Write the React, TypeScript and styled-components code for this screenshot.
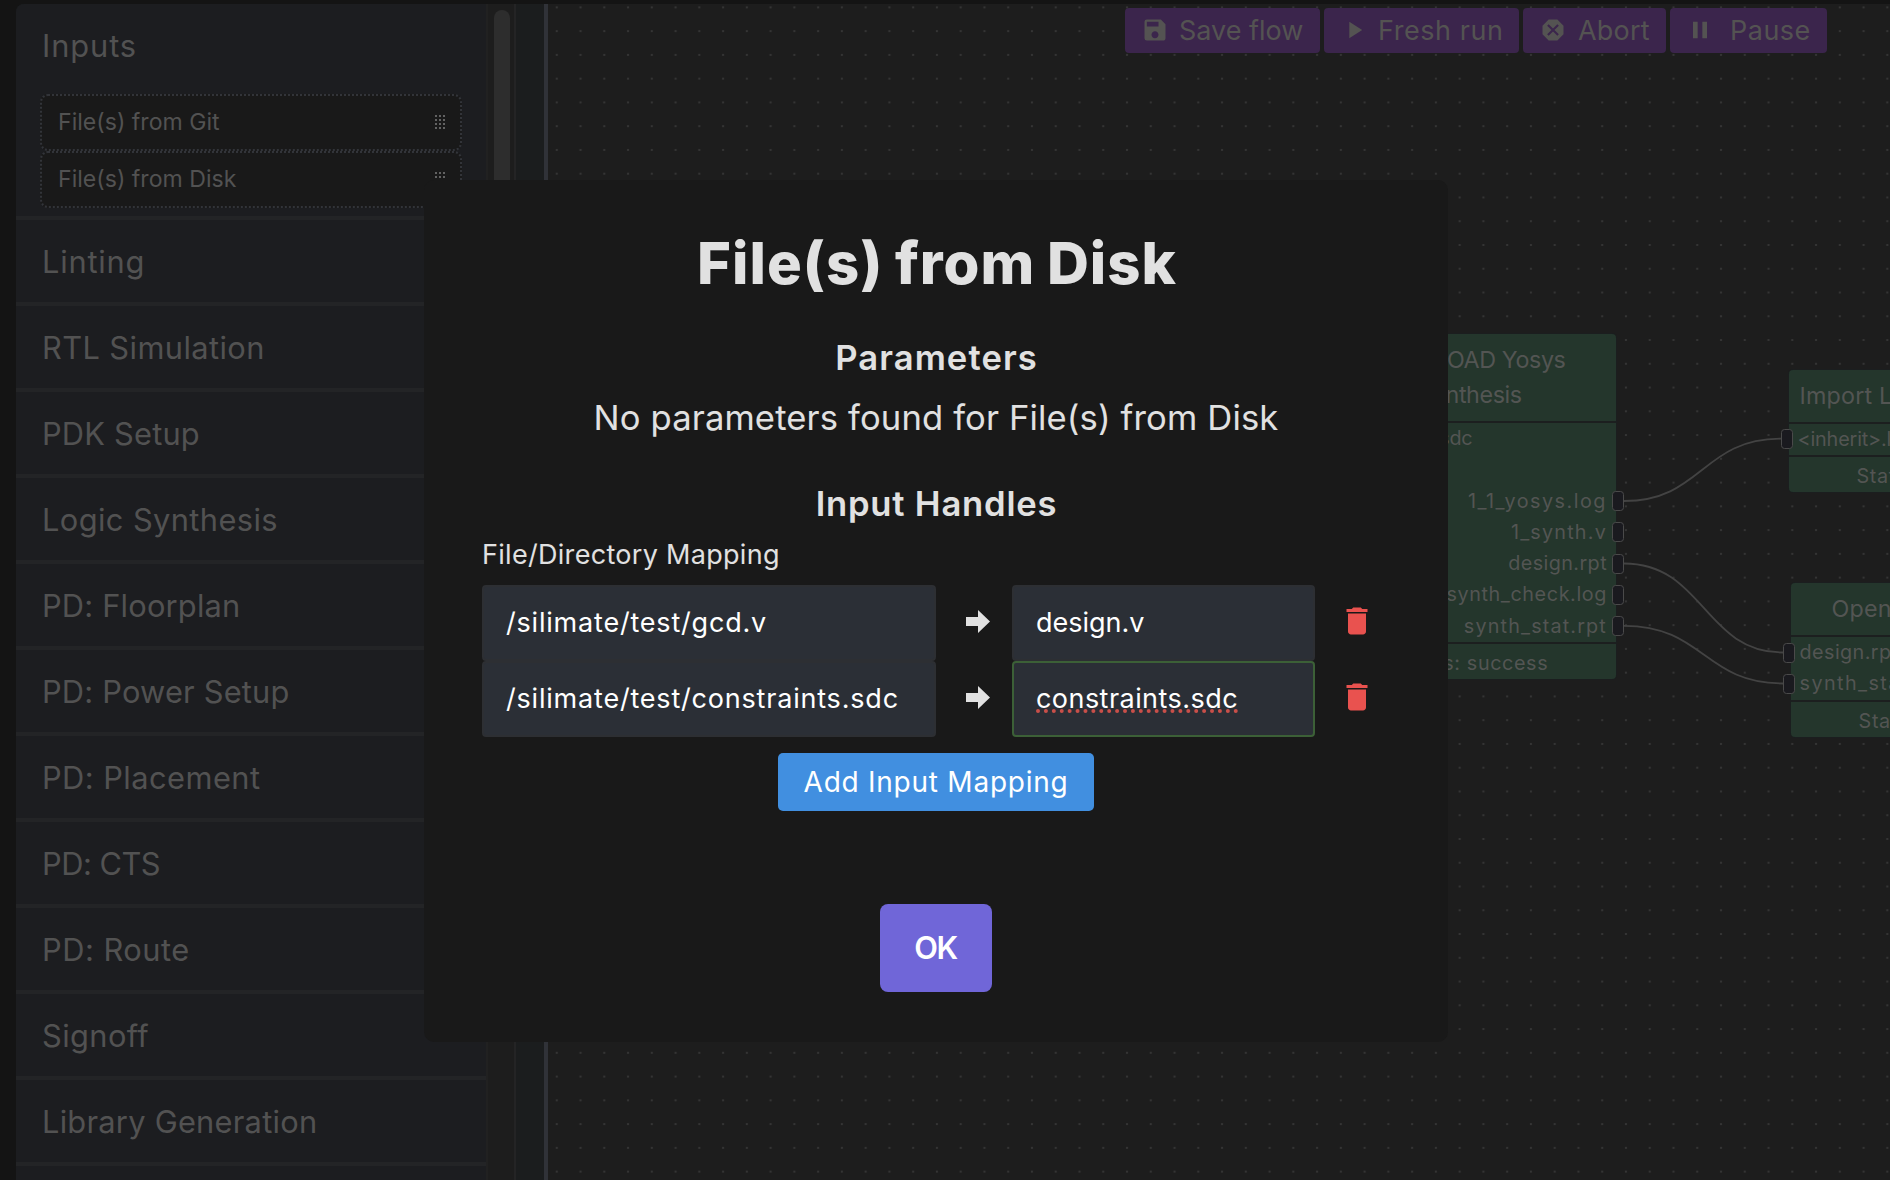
import React from 'react';
import styled, { createGlobalStyle } from 'styled-components';
import { MdSave, MdPlayArrow, MdDangerous, MdPause, MdDelete } from 'react-icons/md';

const GlobalStyle = createGlobalStyle`
  *, *::before, *::after { box-sizing: border-box; }
  html, body { margin: 0; padding: 0; background: #141414; overflow: hidden; }
  body { font-family: Inter, Roboto, "Liberation Sans", sans-serif; }
`;

const Screen = styled.div`
  display: flex;
  width: 1890px;
  height: 1180px;
  padding: 4px 0 0 16px;
  overflow: hidden;
  background: #141414;
`;

/* ---------- sidebar ---------- */

const Sidebar = styled.aside`
  display: flex;
  flex: 0 0 528px;
  overflow: hidden;
  border-top-left-radius: 8px;
  background: #1b1d1e;
`;

const StageList = styled.div`
  flex: 0 0 470px;
  overflow: hidden;
  background: #1c1d20;
`;

const Stage = styled.section`
  border-bottom: 4px solid #232426;
`;

const StageTitle = styled.div<{ $ls?: number }>`
  height: 82px;
  padding-left: 26px;
  line-height: 83px;
  font-size: 30.8px;
  letter-spacing: ${(p) => p.$ls ?? 0.3}px;
  color: #525252;
  white-space: nowrap;
`;

const StageItems = styled.div`
  display: flex;
  flex-direction: column;
  padding: 8px 24px 8px;
`;

const StageItem = styled.div`
  display: flex;
  align-items: center;
  justify-content: space-between;
  height: 57px;
  padding: 0 15px 2px 16px;
  border: 2px dotted #323439;
  border-radius: 8px;
  background: #191919;
  font-size: 23.1px;
  color: #525252;
`;

const ScrollTrack = styled.div`
  flex: 0 0 30px;
  padding: 6px 4px 0 6px;
  border-left: 2px solid #212121;
  border-right: 2px solid #242425;
  background: #1d1d1d;
`;

const ScrollThumb = styled.div`
  width: 16px;
  height: 520px;
  border-radius: 8px;
  background: #2d2d2d;
`;

/* ---------- canvas ---------- */

const Canvas = styled.main`
  position: relative;
  flex: 1;
  overflow: hidden;
  border-left: 4px solid #303238;
  background: #1d1d1d;
`;

const CanvasLayer = styled.svg`
  position: absolute;
  inset: 0;
  width: 100%;
  height: 100%;
`;

const Toolbar = styled.div`
  position: absolute;
  top: 4px;
  right: 63px;
  display: flex;
  gap: 4px;
`;

const ToolButton = styled.div<{ $w: number; $gap?: number; $ls?: number }>`
  display: flex;
  align-items: center;
  gap: ${(p) => p.$gap ?? 10}px;
  width: ${(p) => p.$w}px;
  height: 45px;
  padding: 0 0 1px 16px;
  border-radius: 4px;
  background: #3b254c;
  color: #545352;
  font-size: 27px;
  letter-spacing: ${(p) => p.$ls ?? 0}px;
  white-space: nowrap;
`;

const NodeBox = styled.div<{ $x: number; $y: number; $w: number }>`
  position: absolute;
  left: ${(p) => p.$x - 548}px;
  top: ${(p) => p.$y - 4}px;
  width: ${(p) => p.$w}px;
  border-radius: 4px;
  background: #24362c;
  box-shadow: 0 0 0 1px #1b1e1f;
  color: #535553;
`;

const NodeHeader = styled.div<{ $indent?: number }>`
  padding: 8px 0 9px ${(p) => p.$indent ?? 0}px;
  border-bottom: 2px solid #1c1f1f;
  font-size: 23.3px;
  line-height: 35px;
  letter-spacing: ${(p) => (p.$indent ? 0.2 : -0.4)}px;
  text-align: ${(p) => (p.$indent ? 'left' : 'center')};
  white-space: nowrap;
`;

const PortRow = styled.div<{ $out?: boolean; $ls?: number }>`
  position: relative;
  height: 31.3px;
  padding: 0 9px;
  line-height: 31.8px;
  font-size: 19.8px;
  letter-spacing: ${(p) => p.$ls ?? 0.6}px;
  text-align: ${(p) => (p.$out ? 'right' : 'left')};
  white-space: nowrap;
`;

const Port = styled.i<{ $out?: boolean }>`
  position: absolute;
  top: 5.5px;
  ${(p) => (p.$out ? 'right: -8px;' : 'left: -8px;')}
  width: 12px;
  height: 20px;
  border: 1px solid #4a4a4a;
  border-radius: 3.5px;
  background: #1a1a1f;
`;

const NodeFooter = styled.div<{ $indent?: number }>`
  height: 37px;
  padding: 2px 0 0 ${(p) => p.$indent ?? 0}px;
  border-top: 2px solid #1c1f1f;
  line-height: 34px;
  font-size: 19.8px;
  letter-spacing: 0.6px;
  text-align: ${(p) => (p.$indent ? 'left' : 'center')};
  white-space: nowrap;
`;

/* ---------- modal ---------- */

const Overlay = styled.div`
  position: fixed;
  inset: 0;
  display: flex;
  align-items: flex-start;
  padding: 180px 0 0 424px;
`;

const Modal = styled.div`
  display: flex;
  flex-direction: column;
  align-items: center;
  width: 1024px;
  height: 862px;
  padding: 47px 58px 50px;
  border-radius: 10px;
  background: #191919;
  color: #e1e1e1;
`;

const Title = styled.h1`
  margin: 0;
  padding-left: 2px;
  font-size: 58px;
  font-weight: 800;
  line-height: 72px;
  letter-spacing: 1px;
  word-spacing: -2px;
`;

const Heading = styled.h2<{ $top: number; $ls: number }>`
  margin: ${(p) => p.$top}px 0 0;
  padding-left: 1px;
  font-size: 34.6px;
  font-weight: 600;
  line-height: 48px;
  letter-spacing: ${(p) => p.$ls}px;
`;

const Note = styled.p`
  margin: 12px 0 0;
  font-size: 34.6px;
  line-height: 48px;
  letter-spacing: 0.14px;
`;

const MappingLabel = styled.div`
  align-self: flex-start;
  margin: 8px 0 10px;
  font-size: 27px;
  line-height: 40px;
  letter-spacing: 0.3px;
`;

const MappingRow = styled.div`
  display: flex;
  align-items: center;
  align-self: flex-start;
  height: 76px;
`;

const Field = styled.div<{ $w: number; $focus?: boolean; $ls?: number }>`
  width: ${(p) => p.$w}px;
  height: 76px;
  padding-left: 22px;
  border: 2px solid ${(p) => (p.$focus ? '#3c6037' : '#2d2f33')};
  border-radius: 4px;
  background: #2b2f36;
  color: #fff;
  font-size: 27px;
  line-height: 71px;
  letter-spacing: ${(p) => p.$ls ?? 0}px;
  white-space: nowrap;
`;

const Misspelled = styled.span`
  text-decoration: underline dotted #c94f49 4px;
  text-underline-offset: 1px;
  text-decoration-skip-ink: none;
`;

const ArrowCell = styled.div`
  display: flex;
  justify-content: center;
  width: 76px;
  padding: 0 0 3px 8px;
`;

const DeleteButton = styled.div`
  display: flex;
  margin: 0 0 4px 24px;
  color: #e9524f;
`;

const AddButton = styled.div`
  flex: none;
  width: 316px;
  height: 58px;
  margin-top: 16px;
  border-radius: 5px;
  background: #418fe0;
  color: #fff;
  font-size: 28px;
  line-height: 58px;
  letter-spacing: 0.75px;
  text-align: center;
`;

const OkButton = styled.div`
  flex: none;
  width: 112px;
  height: 88px;
  margin-top: 93px;
  padding-right: 1px;
  border-radius: 8px;
  background: #7066d8;
  color: #fff;
  font-size: 30.8px;
  font-weight: 600;
  line-height: 88px;
  letter-spacing: -1.4px;
  text-align: center;
`;

const Grip = () => (
  <svg width="10" height="14" fill="#626262">
    {[0, 4, 8].map((x) =>
      [0, 4, 8, 12].map((y) => <rect key={`${x}-${y}`} x={x} y={y} width="2" height="2" />)
    )}
  </svg>
);

const Arrow = () => (
  <svg width="24" height="23" viewBox="0 0 24 23" fill="#e1e1e1">
    <path d="M0 7H12V0L24 11.5L12 23V16H0Z" />
  </svg>
);

const stages: [string, number][] = [
  ['Linting', 0.8],
  ['RTL Simulation', 0.4],
  ['PDK Setup', 0.2],
  ['Logic Synthesis', 0.4],
  ['PD: Floorplan', 0.2],
  ['PD: Power Setup', 0.2],
  ['PD: Placement', 0.45],
  ['PD: CTS', -0.5],
  ['PD: Route', 0.5],
  ['Signoff', 0.4],
  ['Library Generation', 0.25],
];

const yosysOutputs: [string, number][] = [
  ['1_1_yosys.log', 1.5],
  ['1_synth.v', 1.2],
  ['design.rpt', 0.4],
  ['synth_check.log', 0.6],
  ['synth_stat.rpt', 1.15],
];

export default function App() {
  return (
    <>
      <GlobalStyle />
      <Screen>
        <Sidebar>
          <StageList>
            <Stage>
              <StageTitle $ls={0.9}>Inputs</StageTitle>
              <StageItems>
                <StageItem>File(s) from Git<Grip /></StageItem>
                <StageItem>File(s) from Disk<Grip /></StageItem>
              </StageItems>
            </Stage>
            {stages.map(([name, ls]) => (
              <Stage key={name}>
                <StageTitle $ls={ls}>{name}</StageTitle>
              </Stage>
            ))}
          </StageList>
          <ScrollTrack><ScrollThumb /></ScrollTrack>
        </Sidebar>

        <Canvas>
          <CanvasLayer>
            <defs>
              <pattern id="dots" x="-3.1" y="-8.5" width="23.76" height="23.76" patternUnits="userSpaceOnUse">
                <circle cx="11.88" cy="11.88" r="1.1" fill="#393939" />
              </pattern>
            </defs>
            <rect width="100%" height="100%" fill="url(#dots)" />
            <g transform="translate(-548 -4)" fill="none" stroke="#434343" strokeWidth="1.8">
              <path d="M1624 501C1702 501 1702 438.7 1781 438.7" />
              <path d="M1624 563.5C1704 563.5 1704 652.5 1783 652.5" />
              <path d="M1624 625.8C1704 625.8 1704 683.5 1783 683.5" />
            </g>
          </CanvasLayer>

          <NodeBox $x={1324} $y={334} $w={292}>
            <NodeHeader>OpenROAD Yosys<br />Synthesis</NodeHeader>
            <PortRow $ls={-0.25}>constraints.sdc<Port /></PortRow>
            <PortRow>design.v<Port /></PortRow>
            {yosysOutputs.map(([name, ls]) => (
              <PortRow key={name} $out $ls={ls}>{name}<Port $out /></PortRow>
            ))}
            <NodeFooter>Status: success</NodeFooter>
          </NodeBox>

          <NodeBox $x={1788.5} $y={369.5} $w={284}>
            <NodeHeader $indent={11}>Import L</NodeHeader>
            <PortRow $ls={-0.15}>&lt;inherit&gt;.l<Port /></PortRow>
            <NodeFooter $indent={68}>Status</NodeFooter>
          </NodeBox>

          <NodeBox $x={1790.6} $y={583} $w={284}>
            <NodeHeader $indent={41}>OpenROAD</NodeHeader>
            <PortRow $ls={0.4}>design.rpt<Port /></PortRow>
            <PortRow $ls={1.4}>synth_stat.rpt<Port /></PortRow>
            <NodeFooter $indent={68}>Status</NodeFooter>
          </NodeBox>

          <Toolbar>
            <ToolButton $w={195}><MdSave size={28} />Save flow</ToolButton>
            <ToolButton $w={195} $ls={0.55}><MdPlayArrow size={28} />Fresh run</ToolButton>
            <ToolButton $w={143} $ls={0.2} $gap={11}><MdDangerous size={28} />Abort</ToolButton>
            <ToolButton $w={157} $ls={0.5} $gap={16}><MdPause size={28} />Pause</ToolButton>
          </Toolbar>
        </Canvas>
      </Screen>

      <Overlay>
        <Modal>
          <Title>File(s) from Disk</Title>
          <Heading $top={34} $ls={1.1}>Parameters</Heading>
          <Note>No parameters found for File(s) from Disk</Note>
          <Heading $top={38} $ls={0.8}>Input Handles</Heading>
          <MappingLabel>File/Directory Mapping</MappingLabel>
          <MappingRow>
            <Field $w={454} $ls={0.8}>/silimate/test/gcd.v</Field>
            <ArrowCell><Arrow /></ArrowCell>
            <Field $w={303}>design.v</Field>
            <DeleteButton><MdDelete size={36} /></DeleteButton>
          </MappingRow>
          <MappingRow>
            <Field $w={454} $ls={0.8}>/silimate/test/constraints.sdc</Field>
            <ArrowCell><Arrow /></ArrowCell>
            <Field $w={303} $focus $ls={0.45}><Misspelled>constraints.sdc</Misspelled></Field>
            <DeleteButton><MdDelete size={36} /></DeleteButton>
          </MappingRow>
          <AddButton>Add Input Mapping</AddButton>
          <OkButton>OK</OkButton>
        </Modal>
      </Overlay>
    </>
  );
}
